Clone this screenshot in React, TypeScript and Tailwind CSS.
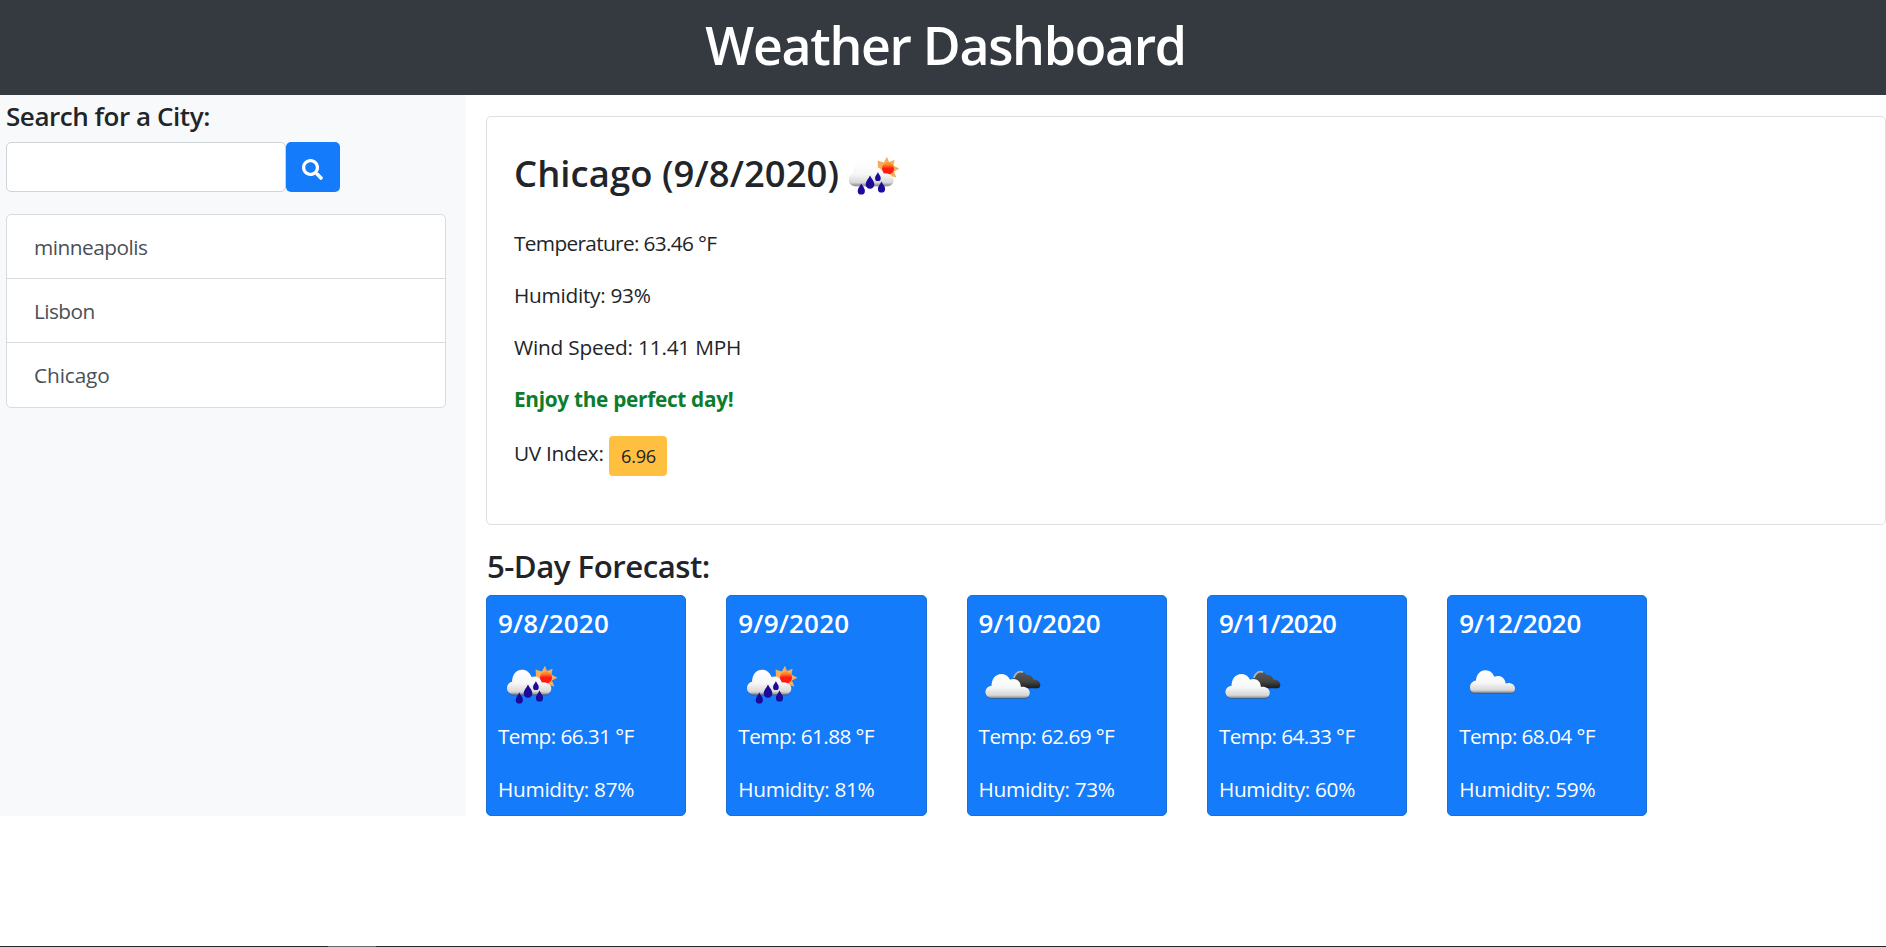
import React from "react";
import { FaSearch } from "react-icons/fa";

type Sky = "rain" | "broken" | "cloud";

const cities = [
  { name: "minneapolis", tracking: "tracking-[-0.5px]" },
  { name: "Lisbon", tracking: "tracking-[-0.55px]" },
  { name: "Chicago", tracking: "tracking-[-0.1px]" },
];

const forecast: { date: string; tracking: string; sky: Sky; temp: string; humidity: string }[] = [
  { date: "9/8/2020", tracking: "tracking-[0.18px]", sky: "rain", temp: "66.31", humidity: "87" },
  { date: "9/9/2020", tracking: "tracking-[0.18px]", sky: "rain", temp: "61.88", humidity: "81" },
  { date: "9/10/2020", tracking: "tracking-[-0.28px]", sky: "broken", temp: "62.69", humidity: "73" },
  { date: "9/11/2020", tracking: "tracking-[-0.8px]", sky: "broken", temp: "64.33", humidity: "60" },
  { date: "9/12/2020", tracking: "tracking-[-0.28px]", sky: "cloud", temp: "68.04", humidity: "59" },
];

function Gradients({ id }: { id: string }) {
  return (
    <defs>
      <linearGradient id={`${id}-light`} x1="0" y1="0" x2="0" y2="1">
        <stop offset="0" stopColor="#ffffff" />
        <stop offset="0.55" stopColor="#f7f7f7" />
        <stop offset="0.88" stopColor="#d8d8d8" />
        <stop offset="1" stopColor="#8f8f8f" />
      </linearGradient>
      <linearGradient id={`${id}-dark`} x1="0" y1="0" x2="0" y2="1">
        <stop offset="0" stopColor="#5a5a5a" />
        <stop offset="0.6" stopColor="#444444" />
        <stop offset="1" stopColor="#1c1c1c" />
      </linearGradient>
      <linearGradient id={`${id}-sun`} x1="0" y1="0" x2="0" y2="1">
        <stop offset="0.15" stopColor="#ff8c2a" />
        <stop offset="0.5" stopColor="#ff1a12" />
      </linearGradient>
      <filter id={`${id}-shadow`} x="-20%" y="-20%" width="140%" height="150%">
        <feDropShadow dx="0" dy="0.8" stdDeviation="0.7" floodColor="#444444" floodOpacity="0.6" />
      </filter>
    </defs>
  );
}

const drop = "M0 -6 C1.4 -3 3.8 -1 3.8 1.8 A3.8 3.8 0 0 1 -3.8 1.8 C-3.8 -1 -1.4 -3 0 -6Z";

function WeatherIcon({ sky, id }: { sky: Sky; id: string }) {
  return (
    <svg viewBox="0 0 62 48" className="h-12 w-[62px] shrink-0">
      <Gradients id={id} />
      {sky === "rain" && (
        <>
          <path
            d="M46 1.8 L48 7 L53.6 4.8 L52.4 10.6 L58.4 13.8 L53 16.4 L55.4 22.4 L49.5 21 L46 26 L38 18 L37 14 L36.6 5.4 L42.8 7.4Z"
            fill="#f4ad5a"
          />
          <circle cx="47" cy="13.6" r="6" fill={`url(#${id}-sun)`} />
          <path
            d="M15 30.5 C10.5 30.5 8 27.5 8 24 C8 20.8 10 18.5 13 17.8 C13.5 10 17.5 5.8 23 5.8 C27.5 5.8 30.8 8.4 32.5 13 C37.5 11.2 41.8 14 42.5 18.8 C48 17.8 52.3 20.5 52.3 24.6 C52.3 28 49.8 30.5 46 30.5Z"
            fill={`url(#${id}-light)`}
            filter={`url(#${id}-shadow)`}
          />
          <g fill="#1c0a9a">
            <path d={drop} transform="translate(29 27.3) scale(1.15)" />
            <path d={drop} transform="translate(20.3 34.2) scale(.95)" />
            <path d={drop} transform="translate(40.5 32.2) scale(.95)" />
            <path d={drop} transform="translate(36.9 21.8) scale(.75)" />
          </g>
        </>
      )}
      {sky === "broken" && (
        <>
          <path
            d="M36 23.5 C32 20 32 15 34.5 11.5 C37.5 7 43.5 6.4 47 11.2 C50 10.6 52.5 12.5 53.4 15.6 C57.4 15.8 60.3 17.5 60.3 20.8 C60.3 23 59.5 24.2 57.5 24.2 L37 24.2Z"
            fill={`url(#${id}-dark)`}
          />
          <path d="M33.8 14 C35.4 8.5 39.5 6.8 43 8.2" stroke="#b4b4b4" strokeWidth="1.8" fill="none" />
          <path
            d="M12 34 C8 34 5.5 31.3 5.5 28 C5.5 24.6 8 22 11.6 21.7 C11.6 15 15.5 10 21.3 10 C25.5 10 28.5 12.3 30 15.8 C35.3 13.4 41 17 40.8 23 C45.5 22.3 49.7 24.5 49.7 28.8 C49.7 31.8 47.7 34 44.5 34Z"
            fill={`url(#${id}-light)`}
            filter={`url(#${id}-shadow)`}
          />
        </>
      )}
      {sky === "cloud" && (
        <path
          d="M15 28.8 C11.5 28.8 10 26 10 23.2 C10 20 12.5 17.2 16 16.6 C16.3 10.5 20 6.2 25.3 6.2 C30 6.2 33 9 34.3 12.8 C39.6 10.6 45 13.2 45.6 19.6 C50.5 17.8 55 20.6 55 24.6 C55 27 53.6 28.8 51.5 28.8Z"
          fill={`url(#${id}-light)`}
          filter={`url(#${id}-shadow)`}
        />
      )}
    </svg>
  );
}

export default function App() {
  return (
    <div className="flex h-[947px] w-full flex-col overflow-hidden bg-white font-['Open_Sans','Noto_Sans',sans-serif] text-[20.8px] text-[#212529]">
      <header className="flex h-[95px] shrink-0 justify-center bg-[#343a40] pt-[13.5px] pl-[5px]">
        <h1 className="text-[51.8px] leading-[62px] font-semibold tracking-[-1.3px] whitespace-nowrap text-white">Weather Dashboard</h1>
      </header>

      <div className="flex h-[720.5px] shrink-0">
        <aside className="w-[466px] shrink-0 bg-[#f8f9fa] pt-1.5 pl-1.5">
          <h2 className="text-[26px] leading-[31px] font-semibold tracking-[-0.45px]">Search for a City:</h2>
          <div className="mt-[10px] flex h-[50px]">
            <input aria-label="City" className="w-[280px] rounded-[5px] border border-[#ced4da] bg-white px-4 outline-none" />
            <button aria-label="Search" className="flex w-[54px] items-center justify-center rounded-[5px] bg-[#147bfb] pt-1 pr-0.5 text-white">
              <FaSearch className="size-[21px]" />
            </button>
          </div>
          <ul className="mt-[22px] w-[440px] divide-y divide-[#d9dcdf] rounded-[5px] border border-[#d9dcdf] bg-white text-[#495057]">
            {cities.map((c) => (
              <li key={c.name} className={`flex h-16 items-center pt-0.5 pl-[27px] ${c.tracking}`}>
                {c.name}
              </li>
            ))}
          </ul>
        </aside>

        <main className="ml-5 flex min-w-0 flex-1 flex-col pt-[21px]">
          <section className="h-[409px] shrink-0 rounded-[5px] border border-[#dfdfdf] pt-[30px] pl-[27px]">
            <div className="flex h-[52px] items-center">
              <h2 className="text-[36.4px] leading-[52px] font-semibold tracking-[0.08px] whitespace-nowrap">Chicago (9/8/2020)</h2>
              <div className="pt-3 pl-[2px]">
                <WeatherIcon sky="rain" id="now" />
              </div>
            </div>
            <p className="mt-[29px] h-[52px] leading-[31px] tracking-[-0.66px]">Temperature: 63.46 °F</p>
            <p className="h-[52px] leading-[31px] tracking-[-0.28px]">Humidity: 93%</p>
            <p className="h-[52px] leading-[31px] tracking-[-0.2px]">Wind Speed: 11.41 MPH</p>
            <p className="h-[52px] leading-[31px] font-bold tracking-[-0.3px] text-[#0b7d2c]">Enjoy the perfect day!</p>
            <p className="flex">
              <span className="w-[95px] pt-[2px] leading-[31px] tracking-[-0.3px]">UV Index:</span>
              <span className="flex h-[40px] w-[58px] items-center justify-center rounded-[4px] bg-[#ffc040] pt-0.5 pl-px text-[18.2px] tracking-[-0.3px]">
                6.96
              </span>
            </p>
          </section>

          <h2 className="mt-[22px] h-[48px] pl-px text-[31.2px] leading-[38px] font-semibold tracking-[-0.5px]">5-Day Forecast:</h2>
          <div className="flex gap-[40px]">
            {forecast.map((d) => (
              <article key={d.date} className="h-[221px] w-[200.3px] shrink-0 rounded-[5px] border border-[#1a6fd9] bg-[#147bfb] pt-3 pl-[11px] text-white">
                <h3 className={`text-[26px] leading-[31px] font-semibold ${d.tracking}`}>{d.date}</h3>
                <div className="mt-[25px] h-[57px] pl-px">
                  <WeatherIcon sky={d.sky} id={d.date.replaceAll("/", "-")} />
                </div>
                <p className="h-[53px] leading-[31px] tracking-[-0.6px]">Temp: {d.temp} °F</p>
                <p className="leading-[31px] tracking-[-0.32px]">Humidity: {d.humidity}%</p>
              </article>
            ))}
          </div>
        </main>
      </div>

      <footer className="mt-auto flex h-px shrink-0 bg-[#24282b] pl-[328px]">
        <div className="h-px w-12 bg-[#666a6d]" />
      </footer>
    </div>
  );
}
